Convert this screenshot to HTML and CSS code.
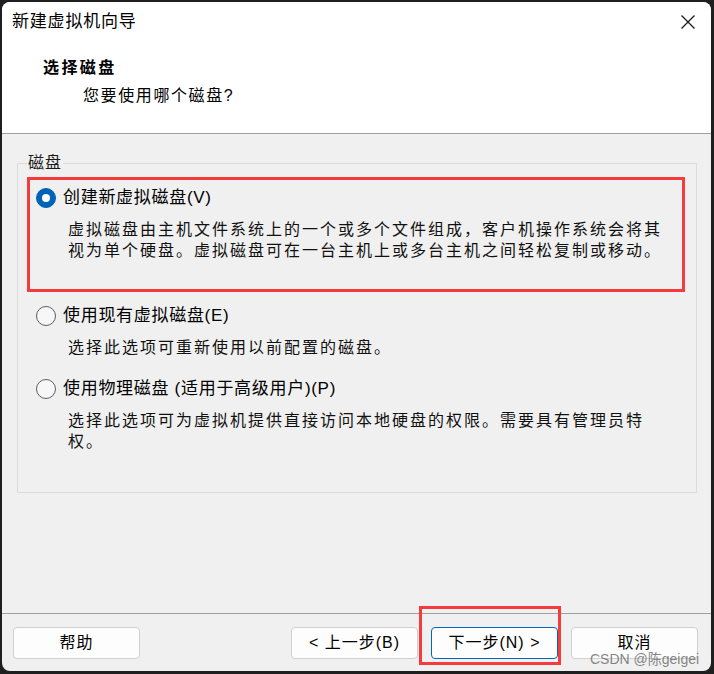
FILE: index.html
```html
<!DOCTYPE html>
<html lang="zh-CN">
<head>
<meta charset="utf-8">
<title>新建虚拟机向导</title>
<link rel="stylesheet" href="styles.css">
</head>
<body>
<div class="window">
  <div class="header">
    <div class="titlebar">
      <span class="title">新建虚拟机向导</span>
      <span class="close">
        <svg width="16" height="16" viewBox="0 0 16 16"><path d="M1.5 1.5 L14.5 14.5 M14.5 1.5 L1.5 14.5" stroke="#1a1a1a" stroke-width="1.3" fill="none"/></svg>
      </span>
    </div>
    <div class="heading">选择磁盘</div>
    <div class="subheading">您要使用哪个磁盘?</div>
  </div>

  <div class="main">
    <div class="group">
      <span class="group-label">磁盘</span>
      <div class="option option-marked">
        <div class="radio-row">
          <span class="radio radio-on"></span>
          <span class="radio-label">创建新虚拟磁盘(V)</span>
        </div>
        <div class="desc">虚拟磁盘由主机文件系统上的一个或多个文件组成，客户机操作系统会将其<br>视为单个硬盘。虚拟磁盘可在一台主机上或多台主机之间轻松复制或移动。</div>
      </div>
      <div class="option option-2">
        <div class="radio-row">
          <span class="radio"></span>
          <span class="radio-label">使用现有虚拟磁盘(E)</span>
        </div>
        <div class="desc">选择此选项可重新使用以前配置的磁盘。</div>
      </div>
      <div class="option option-3">
        <div class="radio-row">
          <span class="radio"></span>
          <span class="radio-label">使用物理磁盘 (适用于高级用户)(P)</span>
        </div>
        <div class="desc">选择此选项可为虚拟机提供直接访问本地硬盘的权限。需要具有管理员特<br>权。</div>
      </div>
    </div>
  </div>

  <div class="footer">
    <button class="btn">帮助</button>
    <span class="spacer"></span>
    <button class="btn">&lt; 上一步(B)</button>
    <button class="btn btn-default">下一步(N) &gt;</button>
    <button class="btn">取消</button>
  </div>

  <div class="mark-next"></div>
  <div class="watermark">CSDN @陈geigei</div>
</div>
</body>
</html>
```

FILE: styles.css
```css
* { box-sizing: border-box; }

html, body {
  margin: 0;
  padding: 0;
}

body {
  width: 714px;
  height: 674px;
  overflow: hidden;
  background: #1f1f1f;
  font-family: "Liberation Sans", "Noto Sans CJK SC", sans-serif;
  color: #000;
}

.window {
  position: relative;
  margin: 2px 3px 0 2px;
  height: 669px;
  border-radius: 8px;
  background: #f0f0f0;
  overflow: hidden;
  display: flex;
  flex-direction: column;
}

.header {
  background: #ffffff;
  height: 132px;
  border-bottom: 1px solid #a0a0a0;
}

.titlebar {
  height: 40px;
  display: flex;
  align-items: center;
  justify-content: space-between;
  padding-left: 10px;
}

.title {
  font-size: 17px;
  letter-spacing: 0.8px;
  line-height: 22px;
}

.close {
  width: 46px;
  height: 40px;
  display: flex;
  align-items: center;
  justify-content: center;
}

.heading {
  margin-top: 15px;
  padding-left: 41px;
  font-size: 16px;
  font-weight: bold;
  letter-spacing: 2.4px;
  line-height: 22px;
}

.subheading {
  margin-top: 6px;
  padding-left: 81px;
  font-size: 16px;
  letter-spacing: 1.6px;
  line-height: 22px;
}

.main {
  flex: 1;
  padding: 29px 14px 0 15px;
}

.group {
  position: relative;
  border: 1px solid #dcdcdc;
  padding: 13px 11px 40px 9px;
}

.group-label {
  position: absolute;
  left: 9px;
  top: -11px;
  padding: 0 1px;
  background: #f0f0f0;
  font-size: 16px;
  line-height: 20px;
  letter-spacing: 1px;
  color: #1a1a1a;
}

.option {
  padding-left: 9px;
}

.option-marked {
  border: 3px solid #f53b3b;
  padding: 6px 6px 28px 6px;
}

.option-2 { margin-top: 12px; }
.option-3 { margin-top: 19px; }

.radio-row {
  height: 24px;
  display: flex;
  align-items: center;
  gap: 7px;
}

.radio {
  width: 20px;
  height: 20px;
  border-radius: 50%;
  border: 1px solid #5c5c5c;
  background: #f7f7f7;
  flex: none;
  display: flex;
  align-items: center;
  justify-content: center;
}

.radio-on {
  border-color: #0063b8;
  background: #0063b8;
}

.radio-on::after {
  content: "";
  width: 8px;
  height: 8px;
  border-radius: 50%;
  background: #ffffff;
}

.radio-label {
  font-size: 17px;
  letter-spacing: 0.7px;
  line-height: 24px;
  white-space: nowrap;
}

.desc {
  margin-top: 9px;
  padding-left: 32px;
  font-size: 16px;
  letter-spacing: 2px;
  line-height: 21px;
  white-space: nowrap;
  color: #111;
}

.footer {
  height: 58px;
  border-top: 1px solid #a0a0a0;
  display: flex;
  align-items: flex-start;
  gap: 13px;
  padding: 13px 13px 0 11px;
}

.spacer { flex: 1; }

.btn {
  width: 127px;
  height: 32px;
  background: #fdfdfd;
  border: 1px solid #d0d0d0;
  border-radius: 4px;
  font-family: "Liberation Sans", "Noto Sans CJK SC", sans-serif;
  font-size: 16px;
  letter-spacing: 1px;
  color: #000;
  padding: 0;
  line-height: 30px;
}

.btn-default {
  border-color: #0067c0;
}

.mark-next {
  position: absolute;
  left: 417px;
  top: 604px;
  width: 142px;
  height: 59px;
  border: 3px solid #f53b3b;
}

.watermark {
  position: absolute;
  left: 588px;
  top: 648px;
  font-size: 14px;
  line-height: 18px;
  color: rgba(110, 110, 110, 0.85);
  white-space: nowrap;
}
```
